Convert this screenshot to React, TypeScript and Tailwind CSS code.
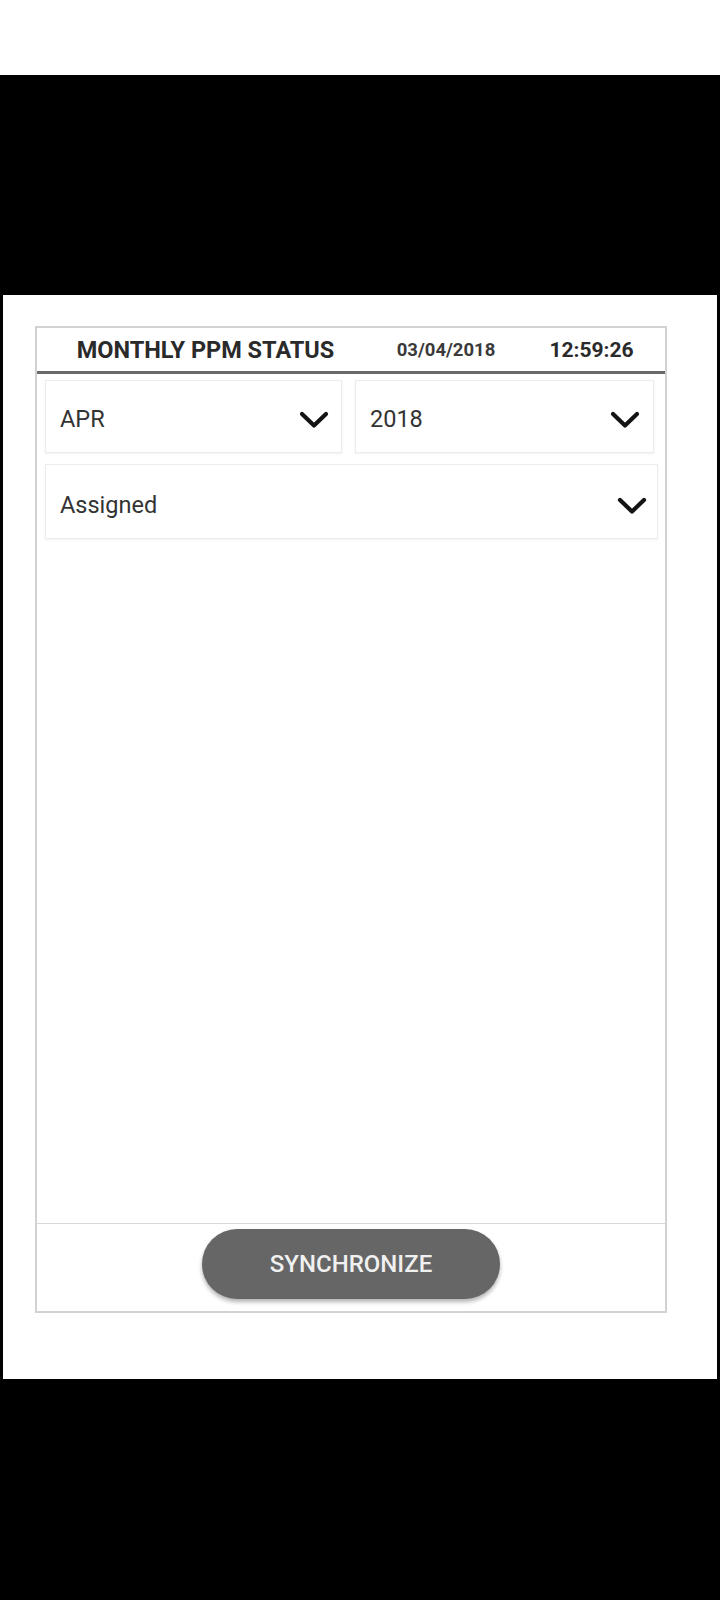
import React from 'react';

const Chevron: React.FC = () => (
  <svg width="30" height="18" viewBox="0 0 30 18" fill="none">
    <polyline points="3,3 15,14.5 27,3" stroke="#141414" strokeWidth="4.2" strokeLinecap="round" strokeLinejoin="round" />
  </svg>
);

const Dropdown: React.FC<{ label: string; className?: string }> = ({ label, className }) => (
  <div
    className={
      'flex items-center justify-between border border-[#ececec] bg-white shadow-[0_1px_2px_rgba(0,0,0,0.06)] pl-[14px] ' +
      (className ?? '')
    }
  >
    <span className="text-[23.5px] text-[#333333]">{label}</span>
    <Chevron />
  </div>
);

export default function App() {
  return (
    <div className="w-[720px] h-[1600px] flex flex-col bg-black font-['Roboto',sans-serif]">
      {/* top status area */}
      <div className="h-[75px] bg-white" />
      <div className="h-[220px] bg-black" />

      {/* dialog panel */}
      <div className="h-[1084px] flex px-[3px]">
        <div className="flex-1 bg-white pt-[31px] pl-[32px] pr-[50px]">
          <div className="h-[987px] flex flex-col border-2 border-[#d2d2d2]">
            {/* Header */}
            <div className="h-[46px] flex items-center border-b-[3px] border-[#6a6a6a] pt-[3px]">
              <div className="w-[337px] text-center text-[23.5px] font-bold text-[#2a2a2a]">MONTHLY PPM STATUS</div>
              <div className="w-[144px] text-center text-[18.5px] font-bold text-[#3a3a3a]">03/04/2018</div>
              <div className="flex-1 text-center text-[21px] font-bold text-[#2a2a2a]">12:59:26</div>
            </div>

            {/* Filters */}
            <div className="flex-1 flex flex-col pt-[6px] pl-[8px] pr-[7px]">
              <div className="flex gap-[13px]">
                <Dropdown label="APR" className="w-[297px] h-[73px] pr-[12px] pt-[6px]" />
                <Dropdown label="2018" className="w-[299px] h-[73px] pr-[13px] pt-[6px]" />
              </div>
              <Dropdown label="Assigned" className="mt-[11px] w-[613px] h-[75px] pr-[10px] pt-[8px]" />
            </div>

            {/* Footer */}
            <div className="h-[88px] flex justify-center border-t border-[#ddd6d8] pt-[5px]">
              <button className="w-[298px] h-[70px] rounded-full bg-[#666666] text-[24px] font-medium text-[#f0f0f0] shadow-[0_3px_4px_rgba(0,0,0,0.3)]">
                SYNCHRONIZE
              </button>
            </div>
          </div>
        </div>
      </div>

      <div className="flex-1 bg-black" />
    </div>
  );
}
